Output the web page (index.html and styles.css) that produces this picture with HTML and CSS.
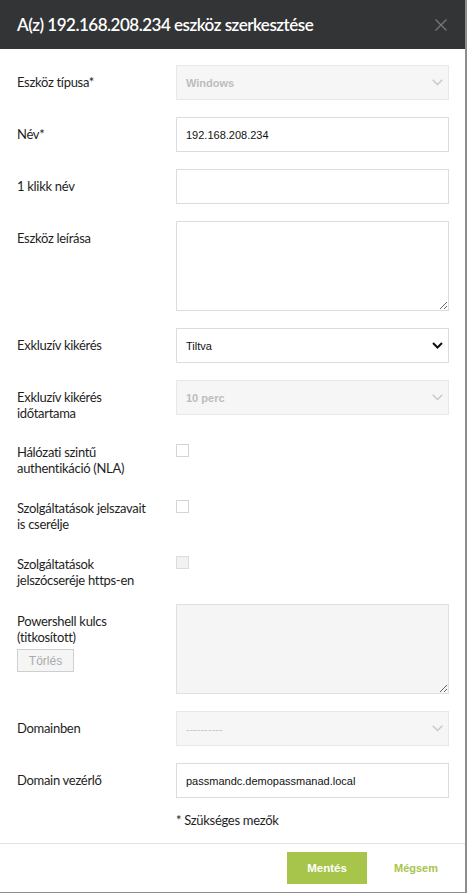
FILE: index.html
```html
<!DOCTYPE html>
<html lang="hu">
<head>
<meta charset="utf-8">
<title>Eszköz szerkesztése</title>
<link rel="stylesheet" href="styles.css">
</head>
<body>
<div class="modal">
  <div class="modal-header">
    <h1 class="title">A(z) 192.168.208.234 eszköz szerkesztése</h1>
    <svg class="close" width="12" height="12" viewBox="0 0 12 12"><path d="M0.5 0.5L11.5 11.5M11.5 0.5L0.5 11.5" stroke="#7a7a7a" stroke-width="1.2" fill="none"/></svg>
  </div>
  <div class="modal-body">
    <div class="row">
      <label class="label">Eszköz típusa*</label>
      <div class="select disabled">
        <div class="control">Windows</div>
        <svg class="chev" width="11" height="7" viewBox="0 0 11 7"><path d="M0.7 0.7L5.5 5.5L10.3 0.7" stroke="#c8c8c8" stroke-width="1.4" fill="none"/></svg>
      </div>
    </div>
    <div class="row">
      <label class="label">Név*</label>
      <div class="control">192.168.208.234</div>
    </div>
    <div class="row">
      <label class="label">1 klikk név</label>
      <div class="control"></div>
    </div>
    <div class="row">
      <label class="label">Eszköz leírása</label>
      <textarea class="area"></textarea>
    </div>
    <div class="row">
      <label class="label">Exkluzív kikérés</label>
      <div class="select">
        <div class="control">Tiltva</div>
        <svg class="chev" width="11" height="7" viewBox="0 0 11 7"><path d="M1 1L5.5 5.5L10 1" stroke="#111" stroke-width="2" fill="none"/></svg>
      </div>
    </div>
    <div class="row">
      <label class="label">Exkluzív kikérés<br>időtartama</label>
      <div class="select disabled">
        <div class="control">10 perc</div>
        <svg class="chev" width="11" height="7" viewBox="0 0 11 7"><path d="M0.7 0.7L5.5 5.5L10.3 0.7" stroke="#c8c8c8" stroke-width="1.4" fill="none"/></svg>
      </div>
    </div>
    <div class="checks">
      <div class="row">
        <label class="label">Hálózati szintű<br>authentikáció (NLA)</label>
        <div><span class="box"></span></div>
      </div>
      <div class="row">
        <label class="label">Szolgáltatások jelszavait<br>is cserélje</label>
        <div><span class="box"></span></div>
      </div>
      <div class="row">
        <label class="label">Szolgáltatások<br>jelszócseréje https-en</label>
        <div><span class="box off"></span></div>
      </div>
    </div>
    <div class="row">
      <div class="label">
        <div>Powershell kulcs<br>(titkosított)</div>
        <button class="del" type="button">Törlés</button>
      </div>
      <textarea class="area off" disabled></textarea>
    </div>
    <div class="row">
      <label class="label">Domainben</label>
      <div class="select disabled">
        <div class="control dash">----------</div>
        <svg class="chev" width="11" height="7" viewBox="0 0 11 7"><path d="M0.7 0.7L5.5 5.5L10.3 0.7" stroke="#c8c8c8" stroke-width="1.4" fill="none"/></svg>
      </div>
    </div>
    <div class="row">
      <label class="label">Domain vezérlő</label>
      <div class="control">passmandc.demopassmanad.local</div>
    </div>
    <div class="row">
      <span></span>
      <div class="note">* Szükséges mezők</div>
    </div>
  </div>
  <div class="modal-footer">
    <button class="save" type="button">Mentés</button>
    <button class="cancel" type="button">Mégsem</button>
  </div>
</div>
</body>
</html>
```
FILE: styles.css
```css
html, body {
  margin: 0;
  padding: 0;
}
body {
  background: #8d8d8d;
  width: 467px;
  height: 893px;
  overflow: hidden;
  font-family: "Lato", "Open Sans", sans-serif;
}
.modal {
  width: 465px;
  background: #fff;
  display: flex;
  flex-direction: column;
}
.modal-header {
  flex-shrink: 0;
  height: 49px;
  background: #333436;
  display: flex;
  align-items: center;
  justify-content: space-between;
  padding: 0 18px 0 17px;
  box-sizing: border-box;
}
.title {
  margin: 0;
  color: #fff;
  font-size: 17px;
  font-weight: 600;
  letter-spacing: -0.5px;
  line-height: 20px;
}
.close {
  display: block;
}
.modal-body {
  padding: 16px 16px 0 17px;
  display: flex;
  flex-direction: column;
  gap: 17px;
}
.row {
  display: grid;
  grid-template-columns: 159px 273px;
}
.label {
  font-size: 13px;
  letter-spacing: -0.3px;
  line-height: 16px;
  color: #1e1e1e;
  padding-top: 9px;
  white-space: nowrap;
}
.control {
  height: 35px;
  box-sizing: border-box;
  border: 1px solid #dcdcdc;
  padding: 0 9px;
  display: flex;
  align-items: center;
  font-family: "Liberation Sans", Arial, sans-serif;
  font-size: 11px;
  color: #111;
  background: #fff;
}
.select {
  position: relative;
}
.select.disabled .control {
  background: #f6f6f6;
  border-color: #e8e8e8;
  color: #bdbdbd;
  font-weight: bold;
}
.select .control.dash {
  font-weight: normal;
  color: #c4c4c4;
}
.chev {
  position: absolute;
  right: 6px;
  top: 14px;
}
.area {
  height: 90px;
  box-sizing: border-box;
  border: 1px solid #dcdcdc;
  margin: 0;
  padding: 6px 9px;
  resize: vertical;
  font-family: "Liberation Sans", Arial, sans-serif;
  background: #fff;
}
.area.off {
  background: #f5f5f5;
  border-color: #e0e0e0;
}
.checks {
  padding-top: 6px;
  display: flex;
  flex-direction: column;
  gap: 24px;
  margin-bottom: -1px;
}
.checks .label {
  padding-top: 0;
}
.box {
  display: block;
  width: 13px;
  height: 13px;
  box-sizing: border-box;
  border: 1px solid #d4d4d4;
  background: #fff;
}
.box.off {
  background: #f2f2f2;
  border-color: #dcdcdc;
}
.del {
  display: block;
  margin-top: 4px;
  width: 57px;
  height: 23px;
  border: 1px solid #cfcfcf;
  background: #f5f5f5;
  color: #aaa;
  font-family: "Liberation Sans", Arial, sans-serif;
  font-size: 12px;
  letter-spacing: 0;
  padding: 0;
}
.note {
  font-size: 13px;
  letter-spacing: -0.3px;
  line-height: 16px;
  color: #1e1e1e;
  margin-top: -3px;
}
.modal-footer {
  flex-shrink: 0;
  border-top: 1px solid #e2e2e2;
  display: flex;
  justify-content: flex-end;
  align-items: center;
  padding: 8px 0 8px 0;
  margin-top: 15px;
}
.save {
  width: 80px;
  height: 32px;
  border: 0;
  background: #a8c54b;
  color: #fff;
  font-family: "Liberation Sans", Arial, sans-serif;
  font-weight: bold;
  font-size: 11.5px;
  padding: 0;
}
.cancel {
  border: 0;
  background: none;
  color: #a8c54b;
  font-family: "Liberation Sans", Arial, sans-serif;
  font-weight: bold;
  font-size: 11px;
  padding: 0 27px;
  height: 32px;
}
```
